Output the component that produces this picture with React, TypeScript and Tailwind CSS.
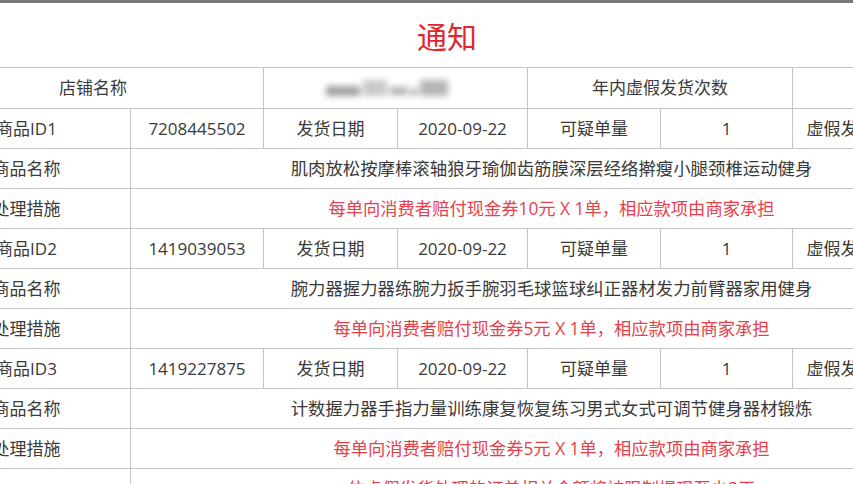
import React from "react";

const FONT = '"Open Sans", "Noto Sans CJK SC", sans-serif';

const items = [
  {
    id: "商品ID1",
    num: "7208445502",
    name: "肌肉放松按摩棒滚轴狼牙瑜伽齿筋膜深层经络擀瘦小腿颈椎运动健身",
    measure: "每单向消费者赔付现金券10元 X 1单，相应款项由商家承担",
  },
  {
    id: "商品ID2",
    num: "1419039053",
    name: "腕力器握力器练腕力扳手腕羽毛球篮球纠正器材发力前臂器家用健身",
    measure: "每单向消费者赔付现金券5元 X 1单，相应款项由商家承担",
  },
  {
    id: "商品ID3",
    num: "1419227875",
    name: "计数握力器手指力量训练康复恢复练习男式女式可调节健身器材锻炼",
    measure: "每单向消费者赔付现金券5元 X 1单，相应款项由商家承担",
  },
];

const td = "border border-[#c4c4c4] text-center align-middle p-0 whitespace-nowrap overflow-hidden";

export default function App() {
  return (
    <div
      className="w-[853px] h-[484px] overflow-hidden bg-white text-[#3a3a3a]"
      style={{ fontFamily: FONT }}
    >
      <div className="border-t-[3px] border-[#7a7a7a]">
        <div className="ml-[-78px] w-[1050px]">
          <div className="h-[64px] flex items-center justify-center pt-[3px] text-[30px] leading-none text-[#e3262e]">
            通知
          </div>
          <table className="border-collapse table-fixed w-[1050px] text-[17px]">
            <colgroup>
              <col className="w-[208px]" />
              <col className="w-[133px]" />
              <col className="w-[134px]" />
              <col className="w-[130px]" />
              <col className="w-[133px]" />
              <col className="w-[132px]" />
              <col className="w-[130px]" />
              <col className="w-[50px]" />
            </colgroup>
            <tbody>
              <tr className="h-[41px]">
                <td colSpan={2} className={td}>店铺名称</td>
                <td colSpan={2} className={td}>
                  <div className="flex items-center justify-center pr-[18px]">
                    <div className="flex items-center gap-[3px] blur-[3px]">
                      <div className="w-[34px] h-[10px] mt-[6px] bg-[#a0a0a0]" />
                      <div className="w-[24px] h-[16px] bg-[#c8c8c8]" />
                      <div className="w-[18px] h-[8px] mt-[6px] bg-[#b0b0b0]" />
                      <div className="w-[6px] h-[6px] mt-[8px] bg-[#999]" />
                      <div className="w-[28px] h-[16px] bg-[#b4b4b4]" />
                    </div>
                  </div>
                </td>
                <td colSpan={2} className={td}>年内虚假发货次数</td>
                <td colSpan={2} className={td}></td>
              </tr>
              {items.map((it) => (
                <React.Fragment key={it.id}>
                  <tr className="h-[40px]">
                    <td className={td}>{it.id}</td>
                    <td className={td}>{it.num}</td>
                    <td className={td}>发货日期</td>
                    <td className={td}>2020-09-22</td>
                    <td className={td}>可疑单量</td>
                    <td className={td}>1</td>
                    <td className={td}>虚假发货单量</td>
                    <td className={td}>1</td>
                  </tr>
                  <tr className="h-[40px]">
                    <td className={td}>商品名称</td>
                    <td colSpan={7} className={`${td} text-[17.4px]`}>{it.name}</td>
                  </tr>
                  <tr className="h-[40px]">
                    <td className={td}>处理措施</td>
                    <td colSpan={7} className={`${td} text-[17.3px] text-[#e8404a]`}>
                      {it.measure}
                    </td>
                  </tr>
                </React.Fragment>
              ))}
              <tr className="h-[40px]">
                <td className={td}></td>
                <td colSpan={7} className={`${td} text-[17.3px] text-[#e8404a]`}>
                  依虚假发货处理的订单相关金额将被限制提现至少3天
                </td>
              </tr>
            </tbody>
          </table>
        </div>
      </div>
    </div>
  );
}
